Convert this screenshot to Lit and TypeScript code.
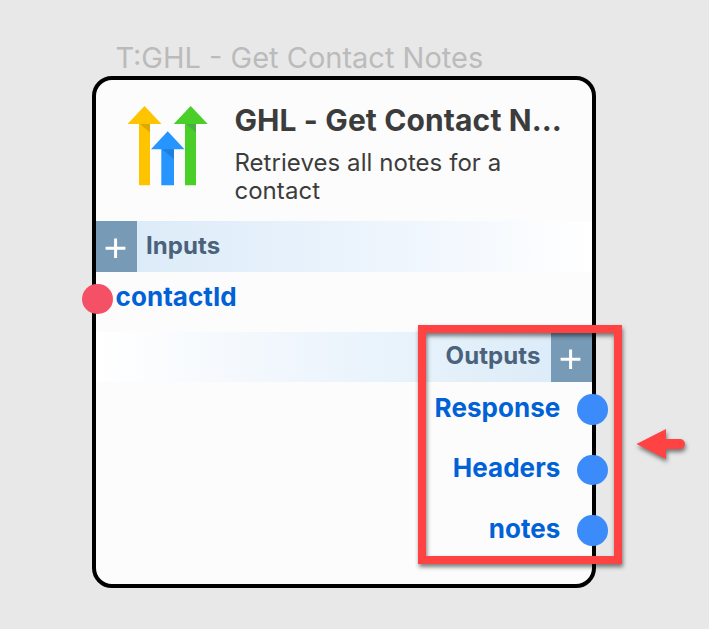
import { LitElement, html, css, svg } from "lit";
import { customElement, property } from "lit/decorators.js";

@customElement("plus-button")
class PlusButton extends LitElement {
  static styles = css`
    :host { display: block; width: 40.3px; flex: none; background: #779ab6; }
    svg { display: block; width: 40.3px; height: 50.2px; }
  `;
  render() {
    return html`<svg viewBox="0 0 40.3 50.2"><path d="M9.6 27.3H29.4M19.6 17.6V36.9" stroke="#fff" stroke-width="3" fill="none"/></svg>`;
  }
}

@customElement("node-port")
class NodePort extends LitElement {
  @property() label = "";
  @property({ reflect: true }) side = "in";
  static styles = css`
    :host { display: flex; align-items: center; height: 60.5px; }
    :host([side="out"]) { flex-direction: row-reverse; margin-right: -16px; }
    :host([side="in"]) { margin-left: -14.2px; }
    .dot { width: 30.4px; height: 30.4px; border-radius: 50%; flex: none; background: #f55166; }
    :host([side="out"]) .dot { background: #3c8bfb; }
    .label { font-size: 26px; line-height: 32px; font-weight: 700; letter-spacing: 0.05px; color: #0062d6; margin: -3.4px 3px 0; white-space: nowrap; }
    :host([side="out"]) .label { margin-right: 17px; }
  `;
  render() {
    return html`<span class="dot"></span><span class="label">${this.label}</span>`;
  }
}

@customElement("app-root")
class AppRoot extends LitElement {
  static styles = css`
    :host {
      display: block; position: relative; width: 709px; height: 629px; overflow: hidden;
      box-sizing: border-box; padding: 39px 0 0 92.4px;
      background: #e8e8e8; font-family: Inter, "Liberation Sans", sans-serif;
    }
    .caption { height: 37.3px; line-height: 37px; padding-left: 23px; font-size: 29px; color: #bbb; white-space: nowrap; }
    .card {
      box-sizing: border-box; width: 503.4px; height: 511.4px;
      border: 4px solid #000; border-radius: 20px; background: #fcfcfc;
    }
    .head { display: flex; height: 141px; box-sizing: border-box; padding: 22px 20px 0 30px; }
    .logo { width: 84px; height: 86px; flex: none; }
    .text { margin-left: 24px; width: 340px; }
    .title { font-size: 30px; line-height: 36px; font-weight: 700; letter-spacing: 0.12px; color: #3c3c3c; white-space: nowrap; }
    .desc { margin-top: 11px; width: 300px; font-size: 24px; line-height: 28px; letter-spacing: 0.06px; color: #3c3c3c; }
    .bar { display: flex; height: 50.5px; color: #4a627c; font-size: 24px; line-height: 49px; font-weight: 700; letter-spacing: 0.08px; }
    .in { background: linear-gradient(90deg, #d9eaf7, #eef5fd 60%, #fff); }
    .out { height: 50.2px; line-height: 48px; flex-direction: row-reverse; background: linear-gradient(270deg, #d9eaf7, #eaf4fc 45%, #eef5fc 55%, #fff); }
    .name { margin: 0 11px 0 9.2px; }
    .inports { height: 60.2px; margin-top: -3px; margin-bottom: 3px; }
    .outports { margin-top: -2.8px; }
    .marker {
      position: absolute; left: 418px; top: 325px; width: 204px; height: 239px;
      box-sizing: border-box; border: 8px solid #ff4343;
      filter: drop-shadow(1px 3px 2px rgba(0,0,0,.5));
    }
    .arrow { position: absolute; left: 630px; top: 422px; width: 64px; height: 50px; filter: drop-shadow(1px 3px 2px rgba(0,0,0,.5)); }
  `;

  logo() {
    return svg`
      <path fill="#ffc400" d="M1.5 18 18.5 0 35.5 18H24V79.2H13V18Z"/>
      <path fill="#4acf28" d="M47.7 18 64.7 0 81.7 18H70V79.2H59V18Z"/>
      <path fill="#2795ff" d="M25 43.2 41.7 25.3 58.5 43.2H48V79.2H35.3V43.2Z"/>
      <path fill="#dba900" d="M14 18H24V26.5Z"/>
      <path fill="#4bae45" d="M60 18H70V26.5Z"/>
      <path fill="#1f7fdd" d="M36 43.2H48V53Z"/>`;
  }

  render() {
    return html`
      <div class="caption">T:GHL - Get Contact Notes</div>
      <div class="card">
        <div class="head">
          <svg class="logo" viewBox="0 -4 84 86">${this.logo()}</svg>
          <div class="text">
            <div class="title">GHL - Get Contact N…</div>
            <div class="desc">Retrieves all notes for a contact</div>
          </div>
        </div>
        <div class="bar in"><plus-button></plus-button><span class="name">Inputs</span></div>
        <div class="inports"><node-port side="in" label="contactId"></node-port></div>
        <div class="bar out"><plus-button></plus-button><span class="name">Outputs</span></div>
        <div class="outports">
          ${["Response", "Headers", "notes"].map((l) => html`<node-port side="out" label=${l}></node-port>`)}
        </div>
      </div>
      <div class="marker"></div>
      <svg class="arrow" viewBox="0 0 64 50"><path fill="#ff4343" d="M6.5 22 36 7V17H50A5 5 0 0 1 50 27H36V37Z"/></svg>
    `;
  }
}
